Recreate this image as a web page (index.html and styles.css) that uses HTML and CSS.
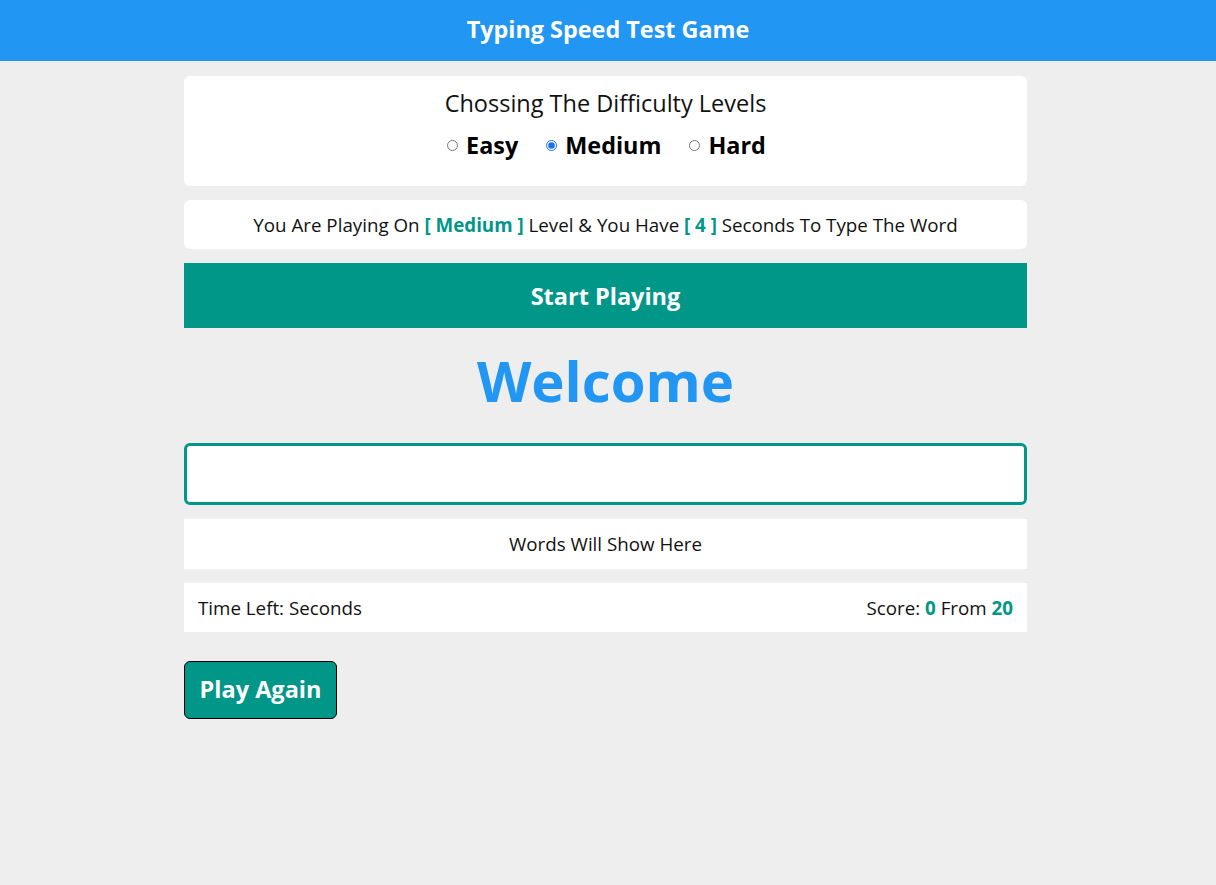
FILE: index.html
```html
<!DOCTYPE html>
<html>
<head>
<meta charset="utf-8">
<title>Typing Speed Test Game</title>
<link rel="stylesheet" href="styles.css">
</head>
<body>
<header class="top">Typing Speed Test Game</header>
<main class="game">
  <section class="levels">
    <div class="levels-title">Chossing The Difficulty Levels</div>
    <div class="levels-options">
      <label class="opt"><input type="radio" name="lvl"> Easy</label>
      <label class="opt"><input type="radio" name="lvl" checked> Medium</label>
      <label class="opt"><input type="radio" name="lvl"> Hard</label>
    </div>
  </section>
  <div class="message">You Are Playing On <span class="hl">[ Medium ]</span> Level &amp; You Have <span class="hl">[ 4 ]</span> Seconds To Type The Word</div>
  <div class="start">Start Playing</div>
  <div class="word">Welcome</div>
  <input class="input" type="text">
  <div class="upcoming">Words Will Show Here</div>
  <div class="control">
    <span>Time Left: Seconds</span>
    <span>Score: <span class="hl">0</span> From <span class="hl">20</span></span>
  </div>
  <div class="again-row"><button class="again">Play Again</button></div>
</main>
</body>
</html>
```

FILE: styles.css
```css
* { box-sizing: border-box; }
body {
  margin: 0;
  background: #eeeeee;
  font-family: "Open Sans", "Noto Sans", sans-serif;
  color: #111;
}
.top {
  background: #2196f3;
  color: #fff;
  font-weight: 700;
  font-size: 23.4px;
  height: 61px;
  display: flex;
  align-items: center;
  justify-content: center;
  padding-bottom: 4px;
}
.game {
  width: 843px;
  margin-left: 184px;
  padding-top: 15px;
  display: flex;
  flex-direction: column;
}
.levels {
  background: #fff;
  border-radius: 6px;
  height: 110px;
  display: flex;
  flex-direction: column;
  align-items: center;
  padding-top: 9px;
}
.levels-title {
  font-size: 23.5px;
  line-height: 36px;
}
.levels-options {
  display: flex;
  gap: 28px;
  margin-top: 9px;
  padding-left: 2px;
}
.opt {
  font-size: 23.4px;
  font-weight: 700;
  line-height: 30px;
  display: flex;
  align-items: center;
  color: #000;
}
.opt input {
  width: 11px;
  height: 11px;
  margin: 1px 8px 0 0;
  accent-color: #1a73e8;
}
.message {
  margin-top: 14px;
  background: #fff;
  border-radius: 6px;
  height: 49px;
  display: flex;
  align-items: center;
  justify-content: center;
  font-size: 18.75px;
  white-space: pre;
}
.hl { color: #009688; font-weight: 700; }
.start {
  margin-top: 14px;
  background: #009688;
  color: #fff;
  font-weight: 700;
  font-size: 23.5px;
  height: 65px;
  display: flex;
  align-items: center;
  justify-content: center;
}
.word {
  color: #2196f3;
  font-weight: 700;
  font-size: 56.3px;
  text-align: center;
  line-height: 104px;
  margin-top: 0;
}
.input {
  margin-top: 11px;
  height: 62px;
  width: 100%;
  border: 3px solid #009688;
  border-radius: 6px;
  background: #fff;
  outline: none;
  font-size: 22px;
  font-family: inherit;
}
.upcoming {
  margin-top: 14px;
  background: #fff;
  height: 50px;
  display: flex;
  align-items: center;
  justify-content: center;
  font-size: 18.75px;
  padding-bottom: 2px;
}
.control {
  margin-top: 14px;
  background: #fff;
  height: 49px;
  display: flex;
  align-items: center;
  justify-content: space-between;
  padding: 0 14px;
  font-size: 18.75px;
}
.again-row { margin-top: 29px; display: flex; }
.again {
  background: #009688;
  color: #fff;
  font-family: inherit;
  font-weight: 700;
  font-size: 23.5px;
  border: 1px solid #000;
  border-radius: 6px;
  height: 58px;
  width: 153px;
  padding: 0 0 2px;
  cursor: pointer;
}
```
